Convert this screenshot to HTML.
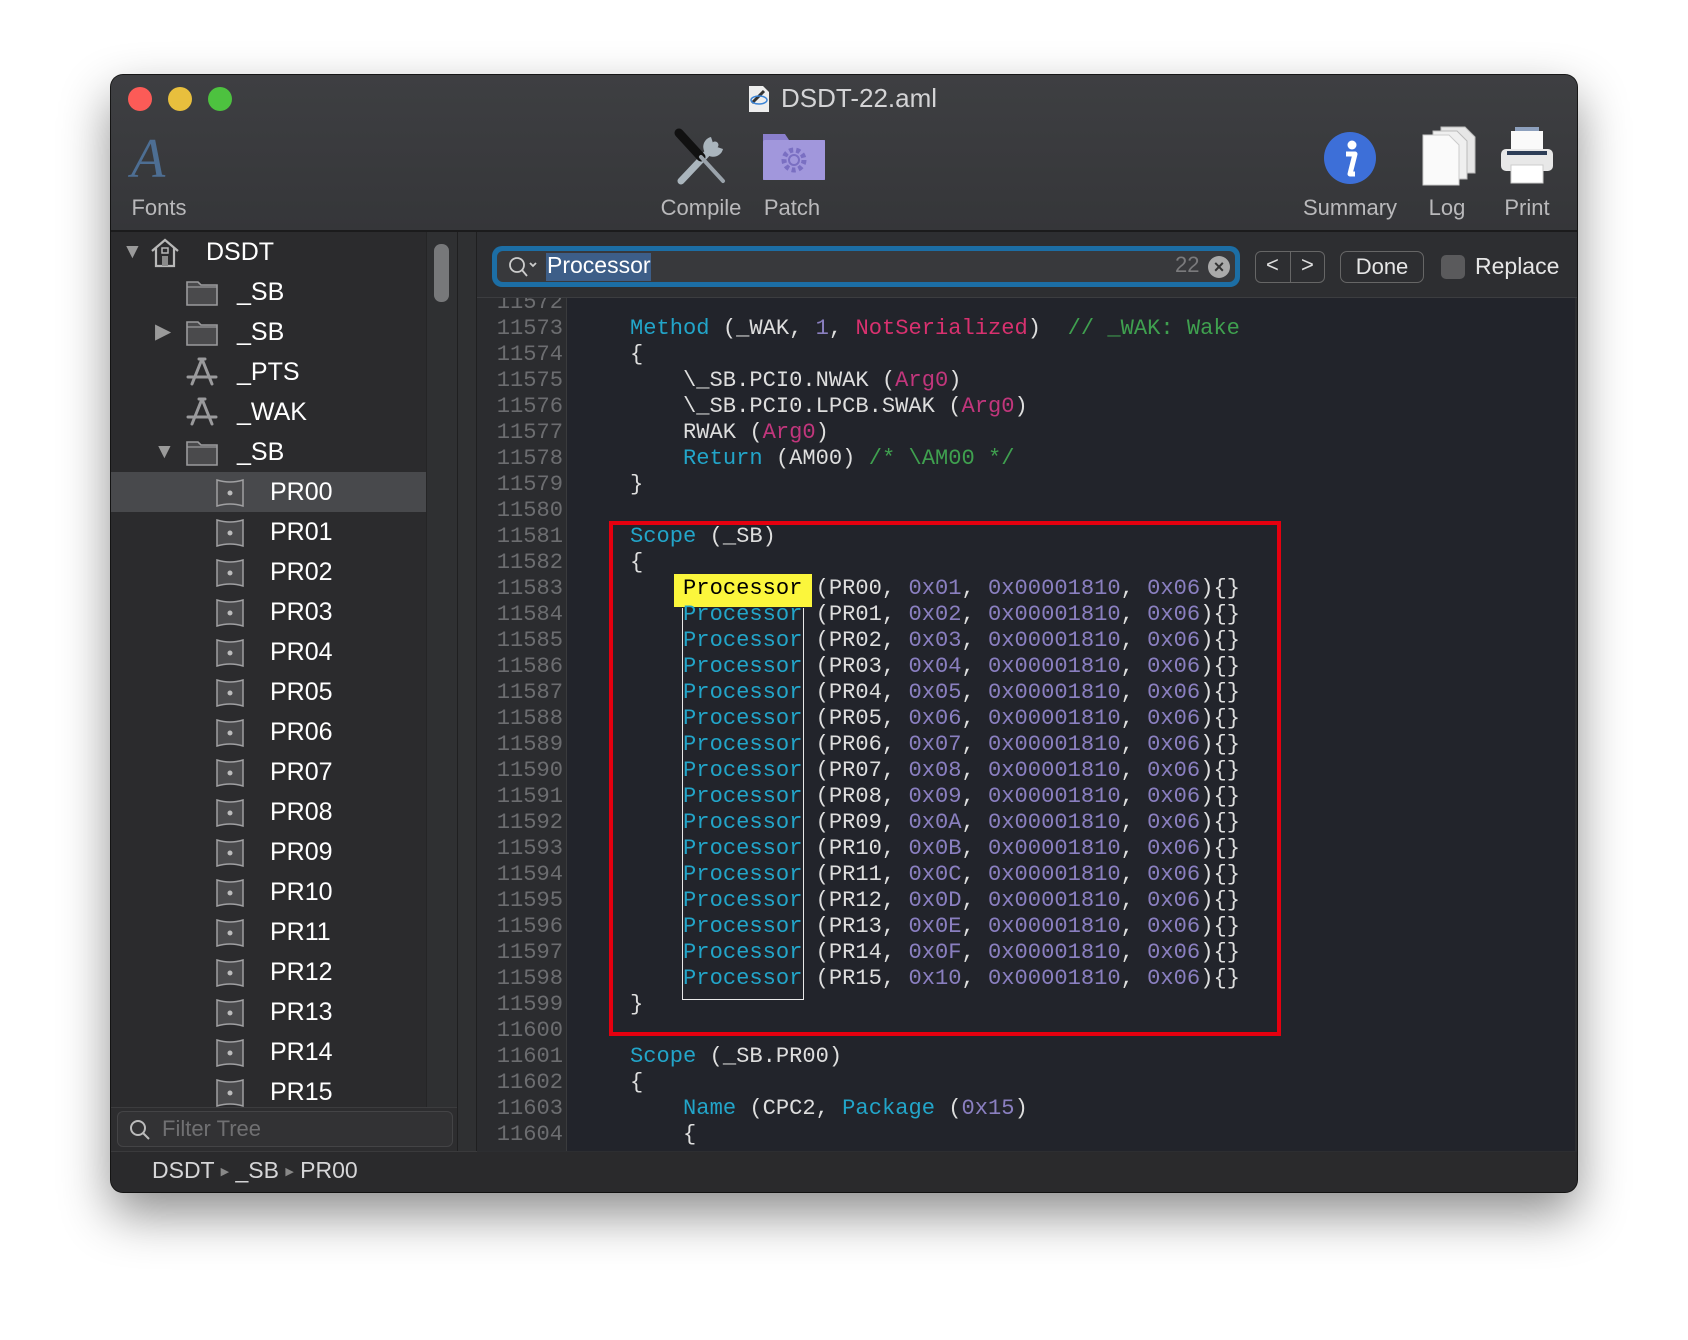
<!DOCTYPE html>
<html><head><meta charset="utf-8"><style>
*{margin:0;padding:0;box-sizing:border-box}
body{width:1688px;height:1340px;background:#fff;position:relative;overflow:hidden;font-family:"Liberation Sans",sans-serif}
.win{position:absolute;left:111px;top:75px;width:1466px;height:1117px;border-radius:12px;background:#2c2c2e;box-shadow:0 22px 50px rgba(0,0,0,.45),0 0 0 1px #1a1a1a;overflow:hidden}
.abs{position:absolute}
.tb{left:0;top:0;width:1466px;height:157px;background:linear-gradient(#3e3f42,#353639);border-bottom:2px solid #1b1b1c}
.dot{width:24px;height:24px;border-radius:50%}
.lbl{color:#b9b9bb;font-size:22px;top:120px;transform:translateX(-50%);white-space:nowrap}
.side{left:0;top:157px;width:346px;height:876px;background:#2b2b2d}
.row{position:absolute;left:0;width:315px;height:40px;color:#fff;font-size:25px;line-height:40px}
.sel{background:#48494c}
.ed{left:366px;top:157px;width:1100px;height:920px;background:#2d2e31}
.code{left:366px;top:223px;width:1098px;height:853px;background:#22242b;overflow:hidden}
.gut{left:0;top:0;width:90px;height:853px;background:#2b2c2f;border-right:1px solid #3a3b3d}
.ln{position:absolute;left:0;width:86px;text-align:right;font-family:"Liberation Mono",monospace;font-size:22.1px;color:#6c6d70;line-height:26px;height:26px}
.cl{position:absolute;left:153px;font-family:"Liberation Mono",monospace;font-size:22.1px;color:#dedede;line-height:26px;height:26px;white-space:pre}
.k{color:#22a5c9}.n{color:#8a7fc0}.a{color:#c1367c}.p{color:#d8316f}.c{color:#3fa04f}
.tri{position:absolute;font-size:21px;color:#9a9a9a}
</style></head><body>
<div class="win">
 <div class="abs tb">
  <div class="abs dot" style="left:17px;background:#fc5b57;top:12px"></div>
  <div class="abs dot" style="left:57px;background:#e8bf3d;top:12px"></div>
  <div class="abs dot" style="left:97px;background:#4dc23f;top:12px"></div>
  <svg class="abs" style="left:636px;top:10px" width="24" height="28" viewBox="0 0 24 28"><path d="M2 1h14l6 6v20H2z" fill="#eee"/><path d="M5 18 L17 6" stroke="#333" stroke-width="3"/><ellipse cx="12" cy="15" rx="8" ry="4" fill="none" stroke="#3b84d6" stroke-width="1.5"/></svg>
  <div class="abs" style="left:670px;top:8px;color:#d4d4d6;font-size:26px">DSDT-22.aml</div>
  <div class="abs" style="left:20px;top:52px;font-family:'Liberation Serif',serif;font-style:italic;font-size:56px;color:#4d6e93">A</div>
  <div class="abs lbl" style="left:48px">Fonts</div>
  <svg class="abs" style="left:560px;top:52px" width="62" height="62" viewBox="0 0 62 62"><path d="M10 54 L44 18" stroke="#aab5bd" stroke-width="7" stroke-linecap="round"/><path d="M40 10 a10 10 0 1 0 12 12 l-6 -2 -4 -4z" fill="#aab5bd"/><path d="M8 6 L30 30" stroke="#111" stroke-width="9" stroke-linecap="round"/><path d="M30 30 L52 54" stroke="#9aa3ab" stroke-width="4" stroke-linecap="round"/></svg>
  <div class="abs lbl" style="left:590px">Compile</div>
  <svg class="abs" style="left:652px;top:55px" width="62" height="50" viewBox="0 0 62 50"><path d="M0 4 h22 l4 6 h36 v40 h-62z" fill="#8a7fcc"/><rect x="0" y="10" width="62" height="40" fill="#a197dc" rx="2"/><circle cx="31" cy="30" r="10" fill="none" stroke="#7a6fc2" stroke-width="5" stroke-dasharray="4 3"/><circle cx="31" cy="30" r="5" fill="none" stroke="#7a6fc2" stroke-width="2"/></svg>
  <div class="abs lbl" style="left:681px">Patch</div>
  <svg class="abs" style="left:1211px;top:55px" width="56" height="56" viewBox="0 0 56 56"><circle cx="28" cy="28" r="26" fill="#3d6fd8"/><circle cx="30" cy="15" r="4.5" fill="#fff"/><path d="M24 24 h9 l-5 20 h5" stroke="#fff" stroke-width="5" fill="none" stroke-linejoin="round"/></svg>
  <div class="abs lbl" style="left:1239px">Summary</div>
  <svg class="abs" style="left:1308px;top:50px" width="60" height="62" viewBox="0 0 60 62"><path d="M22 2h24l10 10v36H22z" fill="#e6e6e6" stroke="#bbb"/><path d="M14 6h24l10 10v38H14z" fill="#efefef" stroke="#bbb"/><path d="M4 10h26l10 10v40H4z" fill="#fafafa" stroke="#ccc"/></svg>
  <div class="abs lbl" style="left:1336px">Log</div>
  <svg class="abs" style="left:1388px;top:50px" width="56" height="62" viewBox="0 0 56 62"><rect x="16" y="2" width="24" height="6" fill="#8da0bd"/><rect x="12" y="6" width="32" height="20" fill="#fafafa"/><rect x="2" y="24" width="52" height="22" rx="5" fill="#e8e8e8"/><rect x="8" y="26" width="40" height="4" fill="#2c3d56"/><rect x="12" y="40" width="32" height="18" fill="#fff" stroke="#ccc"/></svg>
  <div class="abs lbl" style="left:1416px">Print</div>
 </div>

 <div class="abs side">
  <div class="abs" style="left:315px;top:0;width:31px;height:876px;background:#2f3032;border-left:1px solid #252526"></div>
  <div class="abs" style="left:323px;top:12px;width:15px;height:58px;border-radius:7px;background:#77787a"></div>
 </div>
 <div class="abs" style="left:346px;top:157px;width:20px;height:920px;background:#2f3032;border-left:1px solid #1f1f20;border-right:1px solid #1f1f20"></div>
 <div class="abs" style="left:0;top:157px;width:346px">
  <div class="row" style="top:0"><span class="tri" style="left:11px;top:0">▼</span><svg class="abs" style="left:38px;top:4px" width="32" height="32" viewBox="0 0 32 32"><path d="M3 15 L16 4 L29 15 M7 12 v18 h18 v-18" fill="none" stroke="#b8b8b8" stroke-width="2.2"/><rect x="13" y="20" width="6" height="10" fill="#8a8a8a"/><rect x="13" y="12" width="6" height="5" fill="none" stroke="#b8b8b8" stroke-width="1.5"/></svg><span class="abs" style="left:95px">DSDT</span></div>
  <div class="row" style="top:40px"><svg class="abs" style="left:75px;top:7px" width="32" height="27" viewBox="0 0 32 27"><path d="M1 3h11l3 3h16v20H1z" fill="#4a4a4c" stroke="#9a9a9c" stroke-width="1.6"/><path d="M1 8h30" stroke="#9a9a9c" stroke-width="1.3"/></svg><span class="abs" style="left:126px">_SB</span></div>
  <div class="row" style="top:80px"><span class="tri" style="left:44px;top:0">▶</span><svg class="abs" style="left:75px;top:7px" width="32" height="27" viewBox="0 0 32 27"><path d="M1 3h11l3 3h16v20H1z" fill="#4a4a4c" stroke="#9a9a9c" stroke-width="1.6"/><path d="M1 8h30" stroke="#9a9a9c" stroke-width="1.3"/></svg><span class="abs" style="left:126px">_SB</span></div>
  <div class="row" style="top:120px"><svg class="abs" style="left:74px;top:5px" width="34" height="30" viewBox="0 0 34 30"><path d="M17 2 L7 27 M17 2 L27 27 M3 20 H31 M14 2 h6" stroke="#9a9a9c" stroke-width="3" fill="none" stroke-linecap="round"/></svg><span class="abs" style="left:126px">_PTS</span></div>
  <div class="row" style="top:160px"><svg class="abs" style="left:74px;top:5px" width="34" height="30" viewBox="0 0 34 30"><path d="M17 2 L7 27 M17 2 L27 27 M3 20 H31 M14 2 h6" stroke="#9a9a9c" stroke-width="3" fill="none" stroke-linecap="round"/></svg><span class="abs" style="left:126px">_WAK</span></div>
  <div class="row" style="top:200px"><span class="tri" style="left:43px;top:0">▼</span><svg class="abs" style="left:75px;top:7px" width="32" height="27" viewBox="0 0 32 27"><path d="M1 3h11l3 3h16v20H1z" fill="#4a4a4c" stroke="#9a9a9c" stroke-width="1.6"/><path d="M1 8h30" stroke="#9a9a9c" stroke-width="1.3"/></svg><span class="abs" style="left:126px">_SB</span></div>
  <div class="row sel" style="top:240px"></div>
 </div>
 <div class="abs" style="left:0;top:157px;width:315px;height:876px;overflow:hidden">
  <div class="row" style="top:240px"><svg class="abs" style="left:105px;top:7px" width="28" height="28" viewBox="0 0 28 28"><path d="M1 1 Q14 5 27 1 V27 Q14 23 1 27Z" fill="#4a4a4c" stroke="#a0a0a2" stroke-width="1.5"/><circle cx="14" cy="14" r="2.5" fill="#bbb"/></svg><span class="abs" style="left:159px">PR00</span></div>
  <div class="row" style="top:280px"><svg class="abs" style="left:105px;top:7px" width="28" height="28" viewBox="0 0 28 28"><path d="M1 1 Q14 5 27 1 V27 Q14 23 1 27Z" fill="#4a4a4c" stroke="#a0a0a2" stroke-width="1.5"/><circle cx="14" cy="14" r="2.5" fill="#bbb"/></svg><span class="abs" style="left:159px">PR01</span></div>
  <div class="row" style="top:320px"><svg class="abs" style="left:105px;top:7px" width="28" height="28" viewBox="0 0 28 28"><path d="M1 1 Q14 5 27 1 V27 Q14 23 1 27Z" fill="#4a4a4c" stroke="#a0a0a2" stroke-width="1.5"/><circle cx="14" cy="14" r="2.5" fill="#bbb"/></svg><span class="abs" style="left:159px">PR02</span></div>
  <div class="row" style="top:360px"><svg class="abs" style="left:105px;top:7px" width="28" height="28" viewBox="0 0 28 28"><path d="M1 1 Q14 5 27 1 V27 Q14 23 1 27Z" fill="#4a4a4c" stroke="#a0a0a2" stroke-width="1.5"/><circle cx="14" cy="14" r="2.5" fill="#bbb"/></svg><span class="abs" style="left:159px">PR03</span></div>
  <div class="row" style="top:400px"><svg class="abs" style="left:105px;top:7px" width="28" height="28" viewBox="0 0 28 28"><path d="M1 1 Q14 5 27 1 V27 Q14 23 1 27Z" fill="#4a4a4c" stroke="#a0a0a2" stroke-width="1.5"/><circle cx="14" cy="14" r="2.5" fill="#bbb"/></svg><span class="abs" style="left:159px">PR04</span></div>
  <div class="row" style="top:440px"><svg class="abs" style="left:105px;top:7px" width="28" height="28" viewBox="0 0 28 28"><path d="M1 1 Q14 5 27 1 V27 Q14 23 1 27Z" fill="#4a4a4c" stroke="#a0a0a2" stroke-width="1.5"/><circle cx="14" cy="14" r="2.5" fill="#bbb"/></svg><span class="abs" style="left:159px">PR05</span></div>
  <div class="row" style="top:480px"><svg class="abs" style="left:105px;top:7px" width="28" height="28" viewBox="0 0 28 28"><path d="M1 1 Q14 5 27 1 V27 Q14 23 1 27Z" fill="#4a4a4c" stroke="#a0a0a2" stroke-width="1.5"/><circle cx="14" cy="14" r="2.5" fill="#bbb"/></svg><span class="abs" style="left:159px">PR06</span></div>
  <div class="row" style="top:520px"><svg class="abs" style="left:105px;top:7px" width="28" height="28" viewBox="0 0 28 28"><path d="M1 1 Q14 5 27 1 V27 Q14 23 1 27Z" fill="#4a4a4c" stroke="#a0a0a2" stroke-width="1.5"/><circle cx="14" cy="14" r="2.5" fill="#bbb"/></svg><span class="abs" style="left:159px">PR07</span></div>
  <div class="row" style="top:560px"><svg class="abs" style="left:105px;top:7px" width="28" height="28" viewBox="0 0 28 28"><path d="M1 1 Q14 5 27 1 V27 Q14 23 1 27Z" fill="#4a4a4c" stroke="#a0a0a2" stroke-width="1.5"/><circle cx="14" cy="14" r="2.5" fill="#bbb"/></svg><span class="abs" style="left:159px">PR08</span></div>
  <div class="row" style="top:600px"><svg class="abs" style="left:105px;top:7px" width="28" height="28" viewBox="0 0 28 28"><path d="M1 1 Q14 5 27 1 V27 Q14 23 1 27Z" fill="#4a4a4c" stroke="#a0a0a2" stroke-width="1.5"/><circle cx="14" cy="14" r="2.5" fill="#bbb"/></svg><span class="abs" style="left:159px">PR09</span></div>
  <div class="row" style="top:640px"><svg class="abs" style="left:105px;top:7px" width="28" height="28" viewBox="0 0 28 28"><path d="M1 1 Q14 5 27 1 V27 Q14 23 1 27Z" fill="#4a4a4c" stroke="#a0a0a2" stroke-width="1.5"/><circle cx="14" cy="14" r="2.5" fill="#bbb"/></svg><span class="abs" style="left:159px">PR10</span></div>
  <div class="row" style="top:680px"><svg class="abs" style="left:105px;top:7px" width="28" height="28" viewBox="0 0 28 28"><path d="M1 1 Q14 5 27 1 V27 Q14 23 1 27Z" fill="#4a4a4c" stroke="#a0a0a2" stroke-width="1.5"/><circle cx="14" cy="14" r="2.5" fill="#bbb"/></svg><span class="abs" style="left:159px">PR11</span></div>
  <div class="row" style="top:720px"><svg class="abs" style="left:105px;top:7px" width="28" height="28" viewBox="0 0 28 28"><path d="M1 1 Q14 5 27 1 V27 Q14 23 1 27Z" fill="#4a4a4c" stroke="#a0a0a2" stroke-width="1.5"/><circle cx="14" cy="14" r="2.5" fill="#bbb"/></svg><span class="abs" style="left:159px">PR12</span></div>
  <div class="row" style="top:760px"><svg class="abs" style="left:105px;top:7px" width="28" height="28" viewBox="0 0 28 28"><path d="M1 1 Q14 5 27 1 V27 Q14 23 1 27Z" fill="#4a4a4c" stroke="#a0a0a2" stroke-width="1.5"/><circle cx="14" cy="14" r="2.5" fill="#bbb"/></svg><span class="abs" style="left:159px">PR13</span></div>
  <div class="row" style="top:800px"><svg class="abs" style="left:105px;top:7px" width="28" height="28" viewBox="0 0 28 28"><path d="M1 1 Q14 5 27 1 V27 Q14 23 1 27Z" fill="#4a4a4c" stroke="#a0a0a2" stroke-width="1.5"/><circle cx="14" cy="14" r="2.5" fill="#bbb"/></svg><span class="abs" style="left:159px">PR14</span></div>
  <div class="row" style="top:840px"><svg class="abs" style="left:105px;top:7px" width="28" height="28" viewBox="0 0 28 28"><path d="M1 1 Q14 5 27 1 V27 Q14 23 1 27Z" fill="#4a4a4c" stroke="#a0a0a2" stroke-width="1.5"/><circle cx="14" cy="14" r="2.5" fill="#bbb"/></svg><span class="abs" style="left:159px">PR15</span></div>
 </div>
 <div class="abs" style="left:0;top:1032px;width:346px;height:45px;background:#2d2d2f;border-top:1px solid #3c3c3e"></div>
 <div class="abs" style="left:6px;top:1036px;width:336px;height:36px;border:1px solid #444446;border-radius:6px;background:#323234"></div>
 <svg class="abs" style="left:18px;top:1044px" width="22" height="22" viewBox="0 0 22 22"><circle cx="9" cy="9" r="7" fill="none" stroke="#bbb" stroke-width="2"/><path d="M14 14 L20 20" stroke="#bbb" stroke-width="2"/></svg>
 <div class="abs" style="left:51px;top:1041px;font-size:22px;color:#707072">Filter Tree</div>
 <div class="abs" style="left:0;top:1076px;width:1466px;height:41px;background:#2a2a2c;border-top:1px solid #3a3a3c"></div>
 <div class="abs" style="left:41px;top:1082px;font-size:23px;color:#d6d6d8;white-space:pre">DSDT <span style="font-size:11px;color:#888;vertical-align:3px">▶</span> _SB <span style="font-size:11px;color:#888;vertical-align:3px">▶</span> PR00</div>

 <div class="abs ed"></div>
 <div class="abs" style="left:366px;top:222px;width:1100px;height:1px;background:#3c3d40"></div>
 <div class="abs" style="left:381px;top:171px;width:748px;height:41px;border-radius:10px;background:#1c6ea5"></div>
 <div class="abs" style="left:386px;top:176px;width:738px;height:31px;border-radius:6px;background:#38393c"></div>
 <svg class="abs" style="left:397px;top:181px" width="32" height="22" viewBox="0 0 32 22"><circle cx="9" cy="9" r="7" fill="none" stroke="#ccc" stroke-width="1.8"/><path d="M14 14 L19 20 M22 7 l3 3 3 -3" stroke="#ccc" stroke-width="1.8" fill="none"/></svg>
 <div class="abs" style="left:435px;top:178px;height:28px;width:105px;background:#3d5e88"></div>
 <div class="abs" style="left:436px;top:177px;font-size:23px;color:#fff">Processor</div>
 <div class="abs" style="left:1064px;top:177px;font-size:22px;color:#7a7a7c">22</div>
 <div class="abs" style="left:1097px;top:181px;width:22px;height:22px;border-radius:50%;background:#aaa;color:#333;font-size:18px;line-height:22px;text-align:center;font-weight:bold">×</div>
 <div class="abs" style="left:1144px;top:176px;width:70px;height:32px;border:1.5px solid #666;border-radius:6px"></div>
 <div class="abs" style="left:1179px;top:177px;width:1px;height:30px;background:#666"></div>
 <div class="abs" style="left:1155px;top:177px;font-size:22px;color:#ddd">&lt;</div>
 <div class="abs" style="left:1190px;top:177px;font-size:22px;color:#ddd">&gt;</div>
 <div class="abs" style="left:1229px;top:176px;width:84px;height:32px;border:1.5px solid #666;border-radius:7px;color:#e6e6e6;font-size:22px;text-align:center;line-height:29px">Done</div>
 <div class="abs" style="left:1330px;top:180px;width:24px;height:24px;border-radius:5px;background:#5a5a5c"></div>
 <div class="abs" style="left:1364px;top:178px;font-size:23px;color:#e6e6e6">Replace</div>

 <div class="abs code">
  <div class="abs gut"></div>
  <div class="ln" style="top:-8px">11572</div>
  <div class="ln" style="top:18px">11573</div><div class="cl" style="top:18px"><span class="k">Method</span> (_WAK, <span class="n">1</span>, <span class="p">NotSerialized</span>)  <span class="c">// _WAK: Wake</span></div>
  <div class="ln" style="top:44px">11574</div><div class="cl" style="top:44px">{</div>
  <div class="ln" style="top:70px">11575</div><div class="cl" style="top:70px">    \_SB.PCI0.NWAK (<span class="a">Arg0</span>)</div>
  <div class="ln" style="top:96px">11576</div><div class="cl" style="top:96px">    \_SB.PCI0.LPCB.SWAK (<span class="a">Arg0</span>)</div>
  <div class="ln" style="top:122px">11577</div><div class="cl" style="top:122px">    RWAK (<span class="a">Arg0</span>)</div>
  <div class="ln" style="top:148px">11578</div><div class="cl" style="top:148px">    <span class="k">Return</span> (AM00) <span class="c">/* \AM00 */</span></div>
  <div class="ln" style="top:174px">11579</div><div class="cl" style="top:174px">}</div>
  <div class="ln" style="top:200px">11580</div>
  <div class="ln" style="top:226px">11581</div><div class="cl" style="top:226px"><span class="k">Scope</span> (_SB)</div>
  <div class="ln" style="top:252px">11582</div><div class="cl" style="top:252px">{</div>
  <div class="abs" style="left:205px;top:310px;width:122px;height:392px;border:1.5px solid #e8e8e8;border-top:none"></div>
  <div class="abs" style="left:197px;top:276px;width:138px;height:33px;background:#fbf63c"></div>
  <div class="ln" style="top:278px">11583</div><div class="cl" style="top:278px">    <span style="color:#000">Processor</span> (PR00, <span class="n">0x01</span>, <span class="n">0x00001810</span>, <span class="n">0x06</span>){}</div>
  <div class="ln" style="top:304px">11584</div><div class="cl" style="top:304px">    <span class="k">Processor</span> (PR01, <span class="n">0x02</span>, <span class="n">0x00001810</span>, <span class="n">0x06</span>){}</div>
  <div class="ln" style="top:330px">11585</div><div class="cl" style="top:330px">    <span class="k">Processor</span> (PR02, <span class="n">0x03</span>, <span class="n">0x00001810</span>, <span class="n">0x06</span>){}</div>
  <div class="ln" style="top:356px">11586</div><div class="cl" style="top:356px">    <span class="k">Processor</span> (PR03, <span class="n">0x04</span>, <span class="n">0x00001810</span>, <span class="n">0x06</span>){}</div>
  <div class="ln" style="top:382px">11587</div><div class="cl" style="top:382px">    <span class="k">Processor</span> (PR04, <span class="n">0x05</span>, <span class="n">0x00001810</span>, <span class="n">0x06</span>){}</div>
  <div class="ln" style="top:408px">11588</div><div class="cl" style="top:408px">    <span class="k">Processor</span> (PR05, <span class="n">0x06</span>, <span class="n">0x00001810</span>, <span class="n">0x06</span>){}</div>
  <div class="ln" style="top:434px">11589</div><div class="cl" style="top:434px">    <span class="k">Processor</span> (PR06, <span class="n">0x07</span>, <span class="n">0x00001810</span>, <span class="n">0x06</span>){}</div>
  <div class="ln" style="top:460px">11590</div><div class="cl" style="top:460px">    <span class="k">Processor</span> (PR07, <span class="n">0x08</span>, <span class="n">0x00001810</span>, <span class="n">0x06</span>){}</div>
  <div class="ln" style="top:486px">11591</div><div class="cl" style="top:486px">    <span class="k">Processor</span> (PR08, <span class="n">0x09</span>, <span class="n">0x00001810</span>, <span class="n">0x06</span>){}</div>
  <div class="ln" style="top:512px">11592</div><div class="cl" style="top:512px">    <span class="k">Processor</span> (PR09, <span class="n">0x0A</span>, <span class="n">0x00001810</span>, <span class="n">0x06</span>){}</div>
  <div class="ln" style="top:538px">11593</div><div class="cl" style="top:538px">    <span class="k">Processor</span> (PR10, <span class="n">0x0B</span>, <span class="n">0x00001810</span>, <span class="n">0x06</span>){}</div>
  <div class="ln" style="top:564px">11594</div><div class="cl" style="top:564px">    <span class="k">Processor</span> (PR11, <span class="n">0x0C</span>, <span class="n">0x00001810</span>, <span class="n">0x06</span>){}</div>
  <div class="ln" style="top:590px">11595</div><div class="cl" style="top:590px">    <span class="k">Processor</span> (PR12, <span class="n">0x0D</span>, <span class="n">0x00001810</span>, <span class="n">0x06</span>){}</div>
  <div class="ln" style="top:616px">11596</div><div class="cl" style="top:616px">    <span class="k">Processor</span> (PR13, <span class="n">0x0E</span>, <span class="n">0x00001810</span>, <span class="n">0x06</span>){}</div>
  <div class="ln" style="top:642px">11597</div><div class="cl" style="top:642px">    <span class="k">Processor</span> (PR14, <span class="n">0x0F</span>, <span class="n">0x00001810</span>, <span class="n">0x06</span>){}</div>
  <div class="ln" style="top:668px">11598</div><div class="cl" style="top:668px">    <span class="k">Processor</span> (PR15, <span class="n">0x10</span>, <span class="n">0x00001810</span>, <span class="n">0x06</span>){}</div>
  <div class="ln" style="top:694px">11599</div><div class="cl" style="top:694px">}</div>
  <div class="ln" style="top:720px">11600</div>
  <div class="ln" style="top:746px">11601</div><div class="cl" style="top:746px"><span class="k">Scope</span> (_SB.PR00)</div>
  <div class="ln" style="top:772px">11602</div><div class="cl" style="top:772px">{</div>
  <div class="ln" style="top:798px">11603</div><div class="cl" style="top:798px">    <span class="k">Name</span> (CPC2, <span class="k">Package</span> (<span class="n">0x15</span>)</div>
  <div class="ln" style="top:824px">11604</div><div class="cl" style="top:824px">    {</div>
  <div class="abs" style="left:132px;top:223px;width:672px;height:515px;border:4px solid #e5000f"></div>
 </div>
</div>
</body></html>
